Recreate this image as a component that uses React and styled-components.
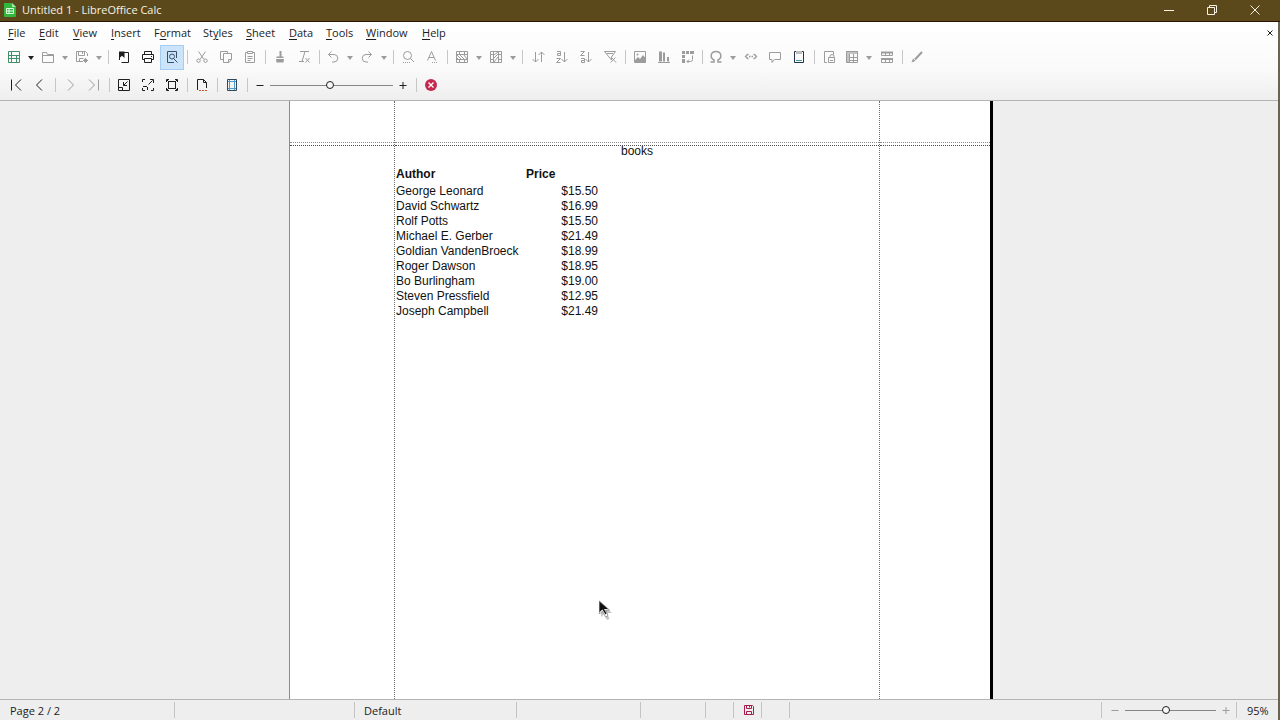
import React from "react";
import styled, { createGlobalStyle, css } from "styled-components";

const GlobalStyle = createGlobalStyle`
  * { box-sizing: border-box; }
  html, body { margin: 0; }
  body {
    font-family: "Open Sans", "Noto Sans", sans-serif;
    font-size: 11px;
    color: #1c1c1c;
    background: #efefef;
  }
  button, input { font: inherit; color: inherit; margin: 0; }
`;

const Window = styled.div`
  display: flex;
  flex-direction: column;
  min-height: 100vh;
  border-right: 2px solid #6a6352;
`;

const TitleBar = styled.header`
  display: flex;
  align-items: center;
  height: 22px;
  padding: 0 4px 1px 3px;
  margin-right: -2px;
  background: #5b491b;
  border-bottom: 1px solid #2c1404;
  color: #f6f1e4;
`;

const Title = styled.h1`
  flex: 1;
  margin: 0 0 0 5px;
  font-size: 11px;
  font-weight: 400;
  line-height: 20px;
`;

const WindowButton = styled.button`
  display: grid;
  place-items: center;
  width: 43px;
  height: 20px;
  padding: 0;
  border: 0;
  background: none;
`;

const Chrome = styled.div`
  background: linear-gradient(#ffffff, #fafafa 60%, #eeeeee);
  border-bottom: 1px solid #b4b4b4;
`;

const MenuBar = styled.nav`
  display: flex;
  align-items: center;
  height: 22px;
`;

const MenuItem = styled.button`
  flex: none;
  width: ${(p) => p.$width}px;
  height: 22px;
  padding: 0 0 1px 8px;
  border: 0;
  background: none;
  text-align: left;
  white-space: nowrap;
  u { text-underline-offset: 2px; }
`;

const CloseDocument = styled.button`
  display: grid;
  place-items: center;
  width: 17px;
  height: 20px;
  margin-left: auto;
  padding: 0;
  border: 0;
  background: none;
`;

const Toolbar = styled.div`
  display: flex;
  align-items: center;
  height: ${(p) => p.$height}px;
  padding-left: ${(p) => p.$inset}px;
`;

const ToolButton = styled.button`
  flex: none;
  display: grid;
  place-items: center;
  width: ${(p) => p.$width || 24}px;
  height: 25px;
  padding: 0;
  border: 1px solid transparent;
  background: none;
  color: ${(p) => (p.$strong ? "#1e1e1e" : "#9c9c9c")};
  ${(p) => p.$active && css`
    background: #cce4fa;
    border-color: #a5cdf2;
  `}
`;

const Separator = styled.span`
  flex: none;
  width: ${(p) => p.$width || 6}px;
  height: 14px;
  background: linear-gradient(#c6c6c6, #c6c6c6) center / 1px 100% no-repeat;
`;

const Glyph = styled.svg`
  display: block;
  fill: none;
  stroke: currentColor;
  stroke-width: 1;
`;

const Slider = styled.input`
  appearance: none;
  flex: none;
  width: ${(p) => p.$width}px;
  height: 14px;
  background: linear-gradient(#858585, #858585) center / 100% 1px no-repeat;
  &::-webkit-slider-thumb {
    appearance: none;
    width: 8px;
    height: 8px;
    border: 1px solid #1f1f1f;
    border-radius: 50%;
    background: #f8f8f8;
  }
`;

const Workspace = styled.main`
  flex: 1;
  display: flex;
  justify-content: center;
  padding-left: 4px;
  background: #eeeeee;
`;

const Page = styled.article`
  flex: 0 1 704px;
  display: flex;
  background: #ffffff;
  border-left: 1px solid #8c8c8c;
  border-right: 3px solid #000000;
  font-family: "Liberation Sans", Arial, sans-serif;
  font-size: 12px;
  color: #111111;
`;

const PageColumn = styled.div`
  display: flex;
  flex-direction: column;
  flex: ${(p) => (p.$width ? `0 0 ${p.$width}px` : "1")};
  border-right: ${(p) => (p.$guide ? "1px dotted #6e6e6e" : "0")};
`;

const TopMargin = styled.div`
  height: 42px;
  border-bottom: 1px dotted #8a8a8a;
`;

const HeaderGap = styled.div`
  height: 3px;
  border-bottom: 1px dotted #4c4c4c;
`;

const SheetName = styled.h2`
  margin: 0 0 10px;
  font-size: 12px;
  font-weight: 400;
  line-height: 11px;
  text-align: center;
`;

const Sheet = styled.table`
  width: 203px;
  table-layout: fixed;
  border-collapse: collapse;
  line-height: 15px;
  white-space: nowrap;
  th, td { padding: 0 0 0 1px; text-align: left; }
  th { padding-bottom: 2px; }
  td:last-child { text-align: right; }
`;

const AuthorColumn = styled.col`
  width: 130px;
`;

const Pointer = styled.svg`
  position: absolute;
  left: 598px;
  top: 600px;
  pointer-events: none;
`;

const StatusBar = styled.footer`
  display: flex;
  align-items: center;
  height: 21px;
  border-top: 1px solid #b4b4b4;
  background: #eeeeee;
`;

const StatusCell = styled.div`
  display: flex;
  align-items: center;
  flex: ${(p) => (p.$width ? `0 0 ${p.$width}px` : "1")};
  height: 16px;
  padding-left: ${(p) => p.$inset || 0}px;
  border-right: ${(p) => (p.$last ? "0" : "1px solid #c4c4c4")};
`;

const shapes = {
  spreadsheet: <g stroke="#3f8f68"><path d="M1.500 1.500h11v11h-11zM1.500 5.500h11M1.500 8.500h11M4.500 1.500v11M9.500 5.500v7" /></g>,
  open: <path d="M1.500 12.500v-10h4l1 2h6v8zM1.500 5.500h11" />,
  save: <path d="M12.500 6V3.500l-2-2h-9v10H8M3.500 1.500v4h6v-4M4.500 11.500v-3h4M7.500 2v2M10.500 8v5M8 10.500h5M9 9l3 3M12 9l-3 3" />,
  exportPdf: <g><path d="M7 2.500h4.500v10H6" /><path d="M2.500 2v8M11 12.500H4.500" /><path d="M2 1.500h5.500V8L5 5.800 2.500 8z" fill="currentColor" stroke="none" /></g>,
  print: <g><path d="M3.500 4.500v-3h7v3M3.500 9.500h-2v-5h11v5h-2M3.500 8.500h7v4h-7z" /><path d="M10 6.500h1" /></g>,
  preview: <g stroke="#34506c"><path d="M11.500 8V1.500h-9v11H9M8.500 8.500l4 4" /><circle cx="7" cy="6.500" r="2.500" /></g>,
  cut: <g><path d="M3.500 1.500l5.500 8M10.500 1.500L5 9.500" /><circle cx="3.500" cy="10.700" r="1.700" /><circle cx="10.500" cy="10.700" r="1.700" /></g>,
  copy: <path d="M4 9.500H1.500v-8h7V3M4.500 3.500h8v6l-2.500 3H4.500zM12.500 9.500H9.500v3" />,
  paste: <path d="M4 2.500H2.500v10h9v-10H10M4.500 1.500h5v2h-5zM4.500 6.500h5M4.500 8.500h5M4.500 10.500h3" />,
  brush: <g><path d="M7.500 1v6" strokeWidth="2" /><path d="M3.500 6.500h7v1.500H3.500zM3 9h8l-.5 3.500H3.500z" fill="currentColor" stroke="none" /></g>,
  clearFormat: <path d="M3 1.500h9M8 1.500l-3 10M2 11.500h5M8.500 8l4 4.500M12.500 8l-4 4.500" />,
  undo: <path d="M5.500 1.500l-3 3 3 3M2.500 4.500H8a3.500 3.500 0 0 1 0 7.500H6" />,
  redo: <path d="M8.500 1.500l3 3-3 3M11.500 4.500H6a3.500 3.500 0 0 0 0 7.500H8" />,
  find: <g><circle cx="6.500" cy="5.500" r="4" /><path d="M9.500 8.500l3.500 3.500" /><path d="M2 12.500h8" strokeDasharray="1 1" /></g>,
  spelling: <g><path d="M2.500 10.500L6.500 1.500l4 9M4 7.500h5" /><path d="M7 12.500h6" strokeDasharray="1 1" /></g>,
  row: <g><path d="M1.500 1.500h11v11h-11zM1.500 4.500h11M1.500 9.500h11M4.500 1.500v3M9.500 1.500v3M4.500 9.500v3M9.500 9.500v3" /><path d="M2 5l4 4M5 5l4 4M9 5l3 4M2 8l1 1" /></g>,
  column: <g><path d="M1.500 1.500h11v11h-11zM4.500 1.500v11M9.500 1.500v11M1.500 4.500h3M1.500 9.500h3M9.500 4.500h3M9.500 9.500h3" /><path d="M5 5l4-3M5 8l4-4M5 12l4-5" /></g>,
  sort: <path d="M4.500 2v10M1.500 9l3 3 3-3M10.500 12V2M7.500 5l3-3 3 3" />,
  funnel: <path d="M1.500 1.500h11L8.500 7v3L6 7zM4 3.500h6M8 7l5 5.500M12.500 7.500l-5 5" />,
  image: <g><path d="M1.500 1.500h11v11h-11z" /><path d="M2 10l3-3 2 2 3-4 2.500 3v4.500H2z" fill="currentColor" stroke="none" /><circle cx="4.500" cy="4.500" r="1" fill="currentColor" stroke="none" /></g>,
  chart: <g><path d="M1 12.500h12" /><path d="M2 1.500h3v10H2zM6 2.500h2v9H6zM10 7h2v4.500h-2z" fill="currentColor" stroke="none" /></g>,
  pivot: <g><path d="M1 1h3v3H1zM5 1h3v3H5zM9 1h4v3H9zM1 5h3v3H1zM1 9h3v4H1z" fill="currentColor" stroke="none" /><path d="M11.500 5.500v4a2 2 0 0 1-2 2H6M8 9.500l-2 2 1.500 1.500" /></g>,
  omega: <path d="M1.500 12h3.500v-2C.5 7.500 1.500 1.500 7 1.500s6.500 6 2 8.500v2h3.500" strokeWidth="1.500" />,
  link: <path d="M4.500 4.500h-1l-2 2 2 2h1M9.500 4.500h1l2 2-2 2h-1M5 6.500h1.500M7.500 6.500H9" strokeWidth="1.300" />,
  comment: <path d="M1.500 2.500h11v7h-6l-2.500 3v-3H1.500z" />,
  headers: <g><path d="M2.500 1.500h9v11h-9z" stroke="#243347" /><path d="M4 2.500h6" stroke="#bdbdbd" strokeWidth="3" /><path d="M4 10.500h6" stroke="#3a9da5" /></g>,
  protect: <g><path d="M5 12.500H2.500v-11h9v3M8 7.500V6.500a2 2 0 0 1 4 0v1" /><path d="M6.500 7.500h6v5h-6zM8 10.500h3" /></g>,
  freeze: <g><path d="M1.500 1.500h11v11h-11z" /><path d="M1 1h12v3H1zM1 1h3v12H1z" fill="currentColor" stroke="none" opacity="0.6" /><path d="M4.500 4v8.500M8.500 4v8.500M4 7.500h8.500M4 10.500h8.500" /></g>,
  split: <g><path d="M1.500 2.500h11v3h-11zM1.500 8.500h11v4h-11zM5.500 3v2.500M9.500 3v2.500M5.500 9v3.500M9.500 9v3.500" /><path d="M1 1.500h12v2H1zM1 8h12v2H1z" fill="currentColor" stroke="none" /></g>,
  pencil: <g><path d="M12 2L5 9.500" strokeWidth="2" /><path d="M1.500 12.500l1.500-4L5.500 11z" fill="currentColor" stroke="none" /></g>,
  first: <path d="M2.500 1.500v11M12 1.500L6.500 7l5.500 5.500" />,
  previous: <path d="M9 1.500L3.500 7 9 12.500" />,
  next: <path d="M5 1.500L10.500 7 5 12.500" />,
  last: <path d="M11.500 1.500v11M2 1.500L7.500 7 2 12.500" />,
  zoomToPage: <g><path d="M1.500 1.500h11v11h-11zM10.500 3.500l-4 4M6.500 4v3.500H10" /><path d="M2 9.500h3.500v3" /></g>,
  zoomFit: <g><path d="M1.500 4V1.500H4M1.500 10v2.500H4M12.500 10v2.500H10M6 8.500H2M6.500 9v3" /><path d="M7.500 6.500l4-4M9 1.500h3.500V5" /></g>,
  fullScreen: <g><path d="M3.500 3.500h7v7h-7z" /><path d="M1.500 4V1.500H4M10 1.500h2.500V4M1.500 10v2.500H4M12.500 10v2.500H10M2 2l2 2M12 2l-2 2M2 12l2-2M12 12l-2-2" /></g>,
  format: <g><path d="M2.500 12V1.500h6l3 3V10M8.500 1.500v3h3" /><path d="M4 12.500h9" stroke="#d1532b" strokeDasharray="2 1" /></g>,
  margins: <g><path d="M2.500 1.500h9v11h-9z" stroke="#30465c" /><path d="M4.500 2v10M9.500 2v10M3 3.500h8M3 10.500h8" stroke="#4b9ccc" /></g>,
  minus: <path d="M3.500 7.500h7" />,
  plus: <path d="M3.500 7.500h7M7 4v7" />,
  stop: <g stroke="none"><circle cx="7" cy="7" r="6" fill="#c5284f" /><path d="M4.500 4.500l5 5M9.500 4.500l-5 5" stroke="#fff" strokeWidth="1.300" /></g>,
  modified: <g stroke="#a81d4d"><path d="M2.500 2.500h8l1 1v8h-9z" /><path d="M4.500 2.500v3h5v-3M4.500 11.500v-3h5v3M7.500 3v1.500" /></g>,
};

const Icon = ({ name }) => (
  <Glyph width="14" height="14" viewBox="0 0 14 14" aria-hidden="true">{shapes[name]}</Glyph>
);

const Caret = () => (
  <Glyph width="8" height="10" viewBox="0 0 8 10" aria-hidden="true">
    <path d="M1 4h6L4 8z" fill="currentColor" stroke="none" />
  </Glyph>
);

const menus = [
  ["", "F", "ile", 31], ["", "E", "dit", 34], ["", "V", "iew", 38], ["", "I", "nsert", 43],
  ["F", "o", "rmat", 49], ["St", "y", "les", 43], ["", "S", "heet", 43], ["", "D", "ata", 37],
  ["", "T", "ools", 40], ["", "W", "indow", 56], ["", "H", "elp", 40],
];

// A number is a separator of that width.
const standardTools = [
  { icon: "spreadsheet", label: "New", menu: true, strong: true },
  { icon: "open", label: "Open", menu: true },
  { icon: "save", label: "Save", menu: true },
  7,
  { icon: "exportPdf", label: "Export as PDF", strong: true },
  { icon: "print", label: "Print", strong: true },
  { icon: "preview", label: "Print Preview", strong: true, active: true },
  6,
  { icon: "cut", label: "Cut" }, { icon: "copy", label: "Copy" }, { icon: "paste", label: "Paste" },
  6,
  { icon: "brush", label: "Clone Formatting" }, { icon: "clearFormat", label: "Clear Formatting" },
  6,
  { icon: "undo", label: "Undo", menu: true }, { icon: "redo", label: "Redo", menu: true },
  6,
  { icon: "find", label: "Find and Replace" }, { icon: "spelling", label: "Spelling" },
  7,
  { icon: "row", label: "Row", menu: true }, { icon: "column", label: "Column", menu: true },
  7,
  { icon: "sort", label: "Sort" }, { icon: "ascending", label: "Sort Ascending", letters: "az" },
  { icon: "descending", label: "Sort Descending", letters: "za" }, { icon: "funnel", label: "AutoFilter" },
  6,
  { icon: "image", label: "Image" }, { icon: "chart", label: "Chart" }, { icon: "pivot", label: "Pivot Table" },
  5,
  { icon: "omega", label: "Special Character", menu: true },
  { icon: "link", label: "Hyperlink" }, { icon: "comment", label: "Comment" },
  { icon: "headers", label: "Headers and Footers", strong: true },
  6,
  { icon: "protect", label: "Define Print Area" },
  { icon: "freeze", label: "Freeze Rows and Columns", menu: true },
  { icon: "split", label: "Split Window" },
  6,
  { icon: "pencil", label: "Show Draw Functions" },
];

const previewTools = [
  { icon: "first", label: "First Page", strong: true }, { icon: "previous", label: "Previous Page", strong: true },
  6,
  { icon: "next", label: "Next Page" }, { icon: "last", label: "Last Page" },
  6,
  { icon: "zoomToPage", label: "Zoom Out", strong: true }, { icon: "zoomFit", label: "Zoom In", strong: true },
  { icon: "fullScreen", label: "Full Screen", strong: true },
  6,
  { icon: "format", label: "Format Page", strong: true },
  6,
  { icon: "margins", label: "Margins", strong: true },
  6,
];

const SortGlyph = ({ letters }) => (
  <Glyph width="14" height="14" viewBox="0 0 14 14" aria-hidden="true">
    {letters === "az"
      ? <path d="M2 1.500h3.500v4H2.500v-2H5M1.500 8.500h4l-4 4h4" />
      : <path d="M1.500 1.500h4l-4 4h4M2 8.500h3.500v4H2.500v-2H5" />}
    <path d="M9.500 2v10M6.500 9l3 3 3-3" />
  </Glyph>
);

const Tools = ({ items }) => items.map((item, i) => {
  if (typeof item === "number") return <Separator key={i} $width={item} />;
  return (
    <React.Fragment key={i}>
      <ToolButton aria-label={item.label} $width={item.menu ? 22 : 24} $strong={item.strong} $active={item.active}>
        {item.letters ? <SortGlyph letters={item.letters} /> : <Icon name={item.icon} />}
      </ToolButton>
      {item.menu && (
        <ToolButton aria-label={`${item.label} options`} $width={12} $strong={item.strong}><Caret /></ToolButton>
      )}
    </React.Fragment>
  );
});

const books = [
  ["George Leonard", "$15.50"], ["David Schwartz", "$16.99"], ["Rolf Potts", "$15.50"],
  ["Michael E. Gerber", "$21.49"], ["Goldian VandenBroeck", "$18.99"], ["Roger Dawson", "$18.95"],
  ["Bo Burlingham", "$19.00"], ["Steven Pressfield", "$12.95"], ["Joseph Campbell", "$21.49"],
];

const PageGuides = () => (
  <>
    <TopMargin />
    <HeaderGap />
  </>
);

export default function App() {
  return (
    <Window>
      <GlobalStyle />
      <TitleBar>
        <svg width="14" height="16" viewBox="0 0 14 16" aria-hidden="true">
          <path d="M1 1h8l4 4v9q0 1-1 1H2q-1 0-1-1z" fill="#32b83e" />
          <path d="M9 1l4 4H9z" fill="#a6eda9" />
          <path d="M3.500 6.500h7v5h-7zM3.500 9h7M6 6.500v5" fill="none" stroke="#e3ffe3" />
        </svg>
        <Title>Untitled 1 - LibreOffice Calc</Title>
        <WindowButton aria-label="Minimize"><Glyph width="12" height="12"><path d="M1 6.500h10" /></Glyph></WindowButton>
        <WindowButton aria-label="Restore">
          <Glyph width="12" height="12"><path d="M1.500 3.500h7v7h-7zM3.500 3V1.500h7v7H9" /></Glyph>
        </WindowButton>
        <WindowButton aria-label="Close"><Glyph width="12" height="12"><path d="M1.500 1.500l9 9M10.500 1.500l-9 9" /></Glyph></WindowButton>
      </TitleBar>
      <Chrome>
        <MenuBar>
          {menus.map(([before, key, after, width]) => (
            <MenuItem key={before + key + after} $width={width}>{before}<u>{key}</u>{after}</MenuItem>
          ))}
          <CloseDocument aria-label="Close Document">
            <Glyph width="8" height="8"><path d="M1.500 1.500l5 5M6.500 1.500l-5 5" /></Glyph>
          </CloseDocument>
        </MenuBar>
        <Toolbar $height={26} $inset={3}><Tools items={standardTools} /></Toolbar>
        <Toolbar $height={30} $inset={4}>
          <Tools items={previewTools} />
          <ToolButton aria-label="Decrease scale" $width={20} $strong><Icon name="minus" /></ToolButton>
          <Slider type="range" aria-label="Scale" min="0" max="100" defaultValue="49" $width={123} />
          <ToolButton aria-label="Increase scale" $width={20} $strong><Icon name="plus" /></ToolButton>
          <Separator />
          <ToolButton aria-label="Close Preview"><Icon name="stop" /></ToolButton>
        </Toolbar>
      </Chrome>
      <Workspace>
        <Page>
          <PageColumn $width={105} $guide><PageGuides /></PageColumn>
          <PageColumn $guide>
            <PageGuides />
            <SheetName>books</SheetName>
            <Sheet>
              <colgroup><AuthorColumn /><col /></colgroup>
              <thead><tr><th>Author</th><th>Price</th></tr></thead>
              <tbody>
                {books.map(([author, price]) => (
                  <tr key={author}><td>{author}</td><td>{price}</td></tr>
                ))}
              </tbody>
            </Sheet>
          </PageColumn>
          <PageColumn $width={110}><PageGuides /></PageColumn>
        </Page>
      </Workspace>
      <StatusBar>
        <StatusCell $width={175} $inset={10}>Page 2 / 2</StatusCell>
        <StatusCell $width={180} />
        <StatusCell $width={162} $inset={9}>Default</StatusCell>
        <StatusCell $width={124} />
        <StatusCell $width={65} />
        <StatusCell $width={28} />
        <StatusCell $width={28} $inset={8}><Icon name="modified" /></StatusCell>
        <StatusCell $width={28} />
        <StatusCell />
        <StatusCell $width={135} $inset={3}>
          <ToolButton aria-label="Zoom out" $width={20}><Icon name="minus" /></ToolButton>
          <Slider type="range" aria-label="Zoom" min="0" max="100" defaultValue="45" $width={91} />
          <ToolButton aria-label="Zoom in" $width={20}><Icon name="plus" /></ToolButton>
        </StatusCell>
        <StatusCell $width={41} $inset={10} $last>95%</StatusCell>
      </StatusBar>
      <Pointer width="16" height="22" viewBox="0 0 16 22" aria-hidden="true">
        <path d="M3 3v14l3-3 3 6 2.500-1-2.500-6h5z" fill="#9c9c9c" opacity="0.600" />
        <path d="M1.500 1v13l3-3 3 6 2.500-1.500L7.500 10h4z" fill="#fff" stroke="#555" strokeWidth="0.500" />
        <path d="M1.500 1.500V12l3-2.500 3 5 1-1L6 9h4z" fill="#111" />
      </Pointer>
    </Window>
  );
}
